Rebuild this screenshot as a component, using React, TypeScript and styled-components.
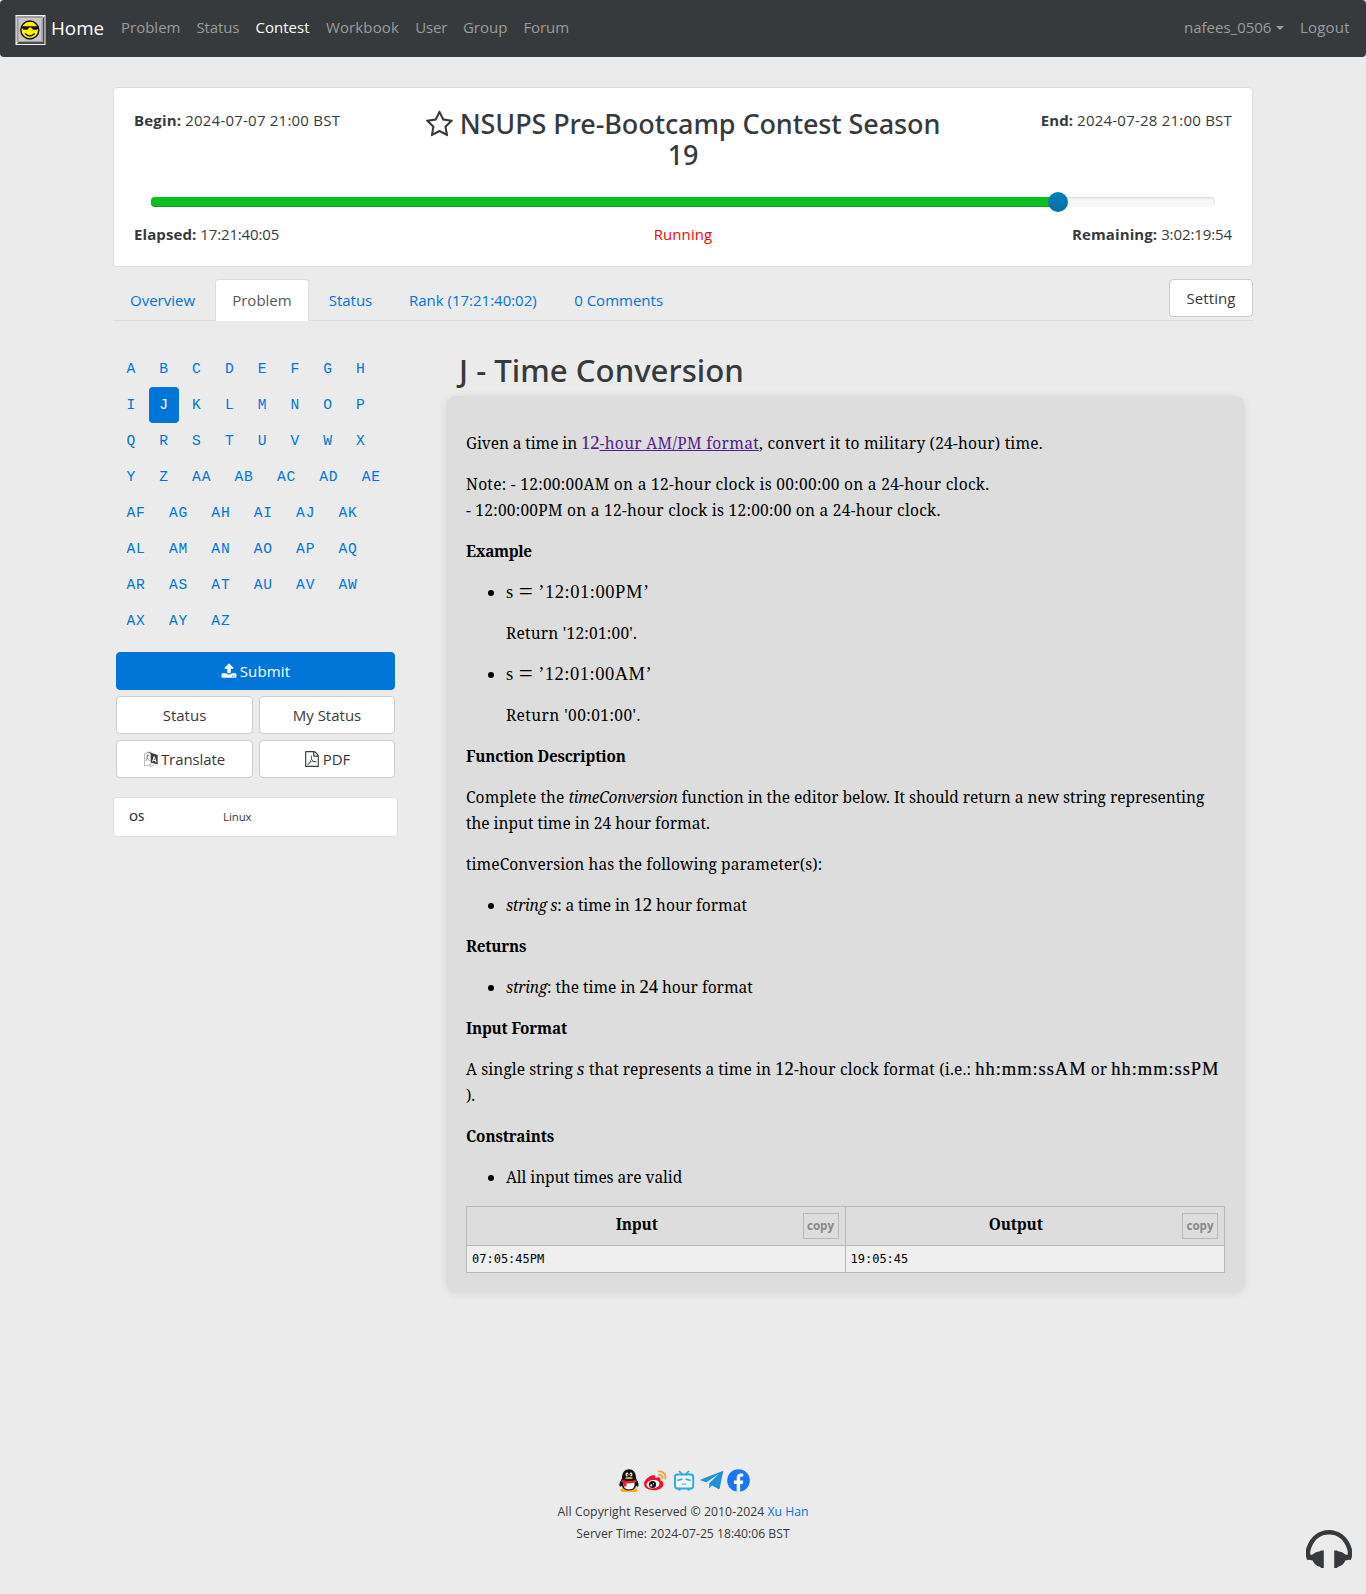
import React from "react";
import styled, { createGlobalStyle } from "styled-components";

const GlobalStyle = createGlobalStyle`
  *, *::before, *::after { box-sizing: border-box; }
  body {
    margin: 0;
    background: #ebebeb;
    color: #373a3c;
    font-family: "Open Sans", "Noto Sans", sans-serif;
    font-size: 15px;
    line-height: 24px;
  }
  a { color: #0275d8; text-decoration: none; }
`;

/* ---------- shared ---------- */

const Tracked = styled.span<{ $ls?: number }>`
  letter-spacing: ${(p) => p.$ls ?? 0}px;
  white-space: nowrap;
`;

const Strong = styled.strong<{ $ls?: number }>`
  font-weight: 700;
  letter-spacing: ${(p) => p.$ls ?? 0}px;
`;

const Page = styled.div`
  display: flex;
  flex-direction: column;
  min-height: 1594px;
`;

/* ---------- navbar ---------- */

const Navbar = styled.nav`
  display: flex;
  align-items: flex-start;
  height: 57px;
  padding: 0 16px 0 15px;
  background: #373a3c;
  border-radius: 4px;
`;

const Brand = styled.a`
  display: flex;
  width: 106px;
  padding-top: 15px;
  gap: 5px;
  color: #fff;
  font-size: 18.8px;
  line-height: 26px;
  white-space: nowrap;
`;

const NavList = styled.div`
  display: flex;
  gap: 16px;
  padding-top: 15px;
  margin-right: auto;
`;

const NavRight = styled(NavList)`
  margin-right: 0;
`;

const NavLink = styled.a<{ $w: number; $ls?: number; $active?: boolean }>`
  width: ${(p) => p.$w}px;
  color: ${(p) => (p.$active ? "#fff" : "#9b9c9d")};
  letter-spacing: ${(p) => p.$ls ?? 0}px;
  white-space: nowrap;
`;

const UserLink = styled(NavLink)`
  display: flex;
  align-items: center;
  gap: 5px;
`;

const Caret = styled.span`
  margin-top: 2px;
  border: 4.5px solid transparent;
  border-top-color: currentColor;
  border-bottom: 0;
`;

/* ---------- contest header ---------- */

const Container = styled.main`
  width: 1140px;
  margin: 30px auto 0;
`;

const ContestCard = styled.section`
  height: 180px;
  padding: 20px;
  background: #fff;
  border: 1px solid #dedede;
  border-radius: 4px;
`;

const CardTop = styled.div`
  display: grid;
  grid-template-columns: 1fr 550px 1fr;
  height: 62px;
`;

const CardBottom = styled.div`
  display: grid;
  grid-template-columns: 1fr auto 1fr;
`;

const TimeText = styled.div<{ $right?: boolean }>`
  text-align: ${(p) => (p.$right ? "right" : "left")};
  white-space: nowrap;
`;

const ContestTitle = styled.h3`
  margin: 0;
  font-family: "Noto Sans", sans-serif;
  font-weight: 500;
  font-size: 27px;
  line-height: 31px;
  letter-spacing: -0.1px;
  text-align: center;
`;

const StarSlot = styled.span`
  display: inline-block;
  width: 29px;
  height: 29px;
  margin-right: 5px;
  vertical-align: -5px;
  svg { display: block; }
`;

const Slider = styled.div`
  position: relative;
  height: 10px;
  margin: 27px 17px 15px;
  border-radius: 4px;
  background: linear-gradient(#f3f3f3, #f9f9f9);
  box-shadow: inset 0 1px 2px rgba(0, 0, 0, 0.1);
`;

const SliderFill = styled.div`
  width: 85.2%;
  height: 10px;
  border-radius: 4px 0 0 4px;
  background: #0abf22;
  box-shadow: inset 0 -1px 0 rgba(0, 0, 0, 0.15);
`;

const SliderHandle = styled.div`
  position: absolute;
  top: -5px;
  left: 85.2%;
  width: 20px;
  height: 20px;
  margin-left: -10px;
  border-radius: 50%;
  background: linear-gradient(#0480be, #036fa5);
`;

const Running = styled.div`
  color: #f00;
  letter-spacing: 0.1px;
`;

/* ---------- tabs ---------- */

const TabBar = styled.div`
  display: flex;
  gap: 3.2px;
  height: 42px;
  margin-top: 12px;
  border-bottom: 1px solid #ddd;
`;

const Tab = styled.a<{ $w: number; $ls?: number; $active?: boolean }>`
  width: ${(p) => p.$w}px;
  height: 42px;
  padding-top: 8px;
  border: 1px solid ${(p) => (p.$active ? "#ddd" : "transparent")};
  border-bottom: 0;
  border-radius: 4px 4px 0 0;
  background: ${(p) => (p.$active ? "#fff" : "transparent")};
  color: ${(p) => (p.$active ? "#55595c" : "#0275d8")};
  letter-spacing: ${(p) => p.$ls ?? 0}px;
  text-align: center;
  white-space: nowrap;
`;

const Button = styled.button<{ $primary?: boolean; $wide?: boolean }>`
  display: flex;
  align-items: center;
  justify-content: center;
  gap: 3px;
  grid-column: ${(p) => (p.$wide ? "1 / -1" : "auto")};
  height: 38px;
  padding: 0 0 1px;
  border: 1px solid ${(p) => (p.$primary ? "#0275d8" : "#ccc")};
  border-radius: 4px;
  background: ${(p) => (p.$primary ? "#0275d8" : "#fff")};
  color: ${(p) => (p.$primary ? "#fff" : "#373a3c")};
  font: inherit;
`;

const SettingButton = styled(Button)`
  width: 84px;
  margin-left: auto;
  letter-spacing: 0.1px;
`;

/* ---------- sidebar ---------- */

const Columns = styled.div`
  display: flex;
  align-items: flex-start;
`;

const Sidebar = styled.aside`
  width: 285px;
  padding-top: 30px;
`;

const ProblemGrid = styled.div`
  display: flex;
  flex-wrap: wrap;
  gap: 0 2.9px;
  padding: 0 0 0 3px;
`;

const ProblemLink = styled.a<{ $active?: boolean }>`
  height: 36px;
  padding: 0 9.8px 0 10.5px;
  border-radius: 4px;
  background: ${(p) => (p.$active ? "#0275d8" : "transparent")};
  color: ${(p) => (p.$active ? "#fff" : "#0275d8")};
  font-family: "Courier New", "Liberation Mono", monospace;
  font-size: 14.6px;
  letter-spacing: 0.84px;
  line-height: 37px;
`;

const Actions = styled.div`
  display: grid;
  grid-template-columns: 137px 136px;
  gap: 6px;
  margin: 13px 3px 0;
`;

const InfoCard = styled.dl`
  display: flex;
  height: 40px;
  margin: 19px 0 0;
  padding: 7px 15px;
  border: 1px solid #dedede;
  border-radius: 4px;
  background: #fff;
  font-size: 11.5px;
  letter-spacing: -0.1px;
`;

const InfoTerm = styled.dt`
  width: 94px;
  font-weight: 600;
`;

const InfoValue = styled.dd`
  margin: 0;
`;

/* ---------- statement ---------- */

const Content = styled.section`
  width: 799px;
  margin-left: 48px;
`;

const ProblemTitle = styled.h2`
  margin: 0;
  padding: 28px 0 0 13px;
  height: 75px;
  font-family: "Noto Sans", sans-serif;
  font-weight: 500;
  font-size: 31.2px;
  line-height: 42px;
  white-space: nowrap;
`;

const Statement = styled.article`
  padding: 35.2px 20px 20px;
  height: 897px;
  border-radius: 10px;
  background: #ddd;
  box-shadow: 0 1px 10px rgba(0, 0, 0, 0.07);
  color: #000;
  font-family: "Noto Serif", "Liberation Serif", serif;
  font-size: 15.5px;
  line-height: 25.84px;
  white-space: nowrap;
  p { margin: 0 0 15.2px; }
  ul { margin: 0 0 15.2px; padding-left: 40px; }
`;

const Bold = styled.b<{ $ls?: number }>`
  font-size: 15.3px;
  font-weight: 700;
  letter-spacing: ${(p) => p.$ls ?? -0.25}px;
`;

const Italic = styled.em<{ $ls?: number }>`
  letter-spacing: ${(p) => p.$ls ?? -0.3}px;
`;

const Visited = styled.a`
  color: #551a8b;
  letter-spacing: 0.34px;
  text-decoration: underline;
`;

const MathText = styled.span<{ $ls?: number; $heavy?: boolean; $italic?: boolean; $visited?: boolean }>`
  display: inline-block;
  color: ${(p) => (p.$visited ? "#551a8b" : "#000")};
  font-family: "Liberation Serif", serif;
  font-size: 18.5px;
  font-style: ${(p) => (p.$italic ? "italic" : "normal")};
  line-height: 20px;
  letter-spacing: ${(p) => p.$ls ?? 0}px;
  -webkit-text-stroke: ${(p) => (p.$heavy ? "0.2px currentColor" : "0")};
`;

const Equals = styled(MathText)`
  width: 25px;
  font-size: 25px;
  line-height: 14px;
  text-align: center;
  vertical-align: -2px;
`;

const Samples = styled.div`
  display: grid;
  grid-template-columns: 1fr 1fr;
  border: 1px solid #b9b9b9;
  height: 67px;
  grid-template-rows: 39px 26px;
`;

const SampleHead = styled.div<{ $last?: boolean }>`
  display: flex;
  justify-content: space-between;
  padding: 6px;
  border-right: ${(p) => (p.$last ? 0 : 1)}px solid #b9b9b9;
  border-bottom: 1px solid #b9b9b9;
`;

const SampleTitle = styled(Bold)`
  flex: 1;
  padding-right: 2px;
  line-height: 23px;
  font-size: 15.4px;
  letter-spacing: -0.2px;
  text-align: center;
`;

const CopyButton = styled.button`
  width: 36px;
  height: 26px;
  padding: 0;
  border: 1px solid #b9b9b9;
  background: transparent;
  color: #888;
  font: 700 11.6px/24px "Open Sans", sans-serif;
`;

const SampleCell = styled.pre<{ $last?: boolean }>`
  margin: 0;
  padding-left: 5px;
  border-right: ${(p) => (p.$last ? 0 : 1)}px solid #b9b9b9;
  background: #efefef;
  font: 12px/26px "DejaVu Sans Mono", monospace;
`;

/* ---------- footer ---------- */

const Footer = styled.footer`
  position: relative;
  display: flex;
  flex-direction: column;
  align-items: center;
  margin-top: 175px;
  font-size: 12.2px;
  line-height: 22px;
`;

const Socials = styled.div`
  display: flex;
  gap: 3.3px;
  height: 25px;
  margin-bottom: 8px;
  padding-left: 2px;
`;

const Support = styled.div`
  position: absolute;
  right: 14px;
  top: 61px;
  line-height: 0;
`;

/* ---------- icons ---------- */

const FaIcon = ({ d, size }: { d: string; size: number }) => (
  <svg width={size} height={size} viewBox="0 0 1792 1792" fill="currentColor">
    <path d={d} />
  </svg>
);

const STAR =
  "M1137 1004l306-297-422-62-189-382-189 382-422 62 306 297-73 421 378-199 377 199zm527-357q0 22-26 48l-363 354 86 500q1 7 1 20 0 50-41 50-19 0-40-12l-449-236-449 236q-22 12-40 12-21 0-31.5-14.5t-10.5-35.5q0-6 2-20l86-500-364-354q-25-27-25-48 0-37 56-46l502-73 225-455q19-41 49-41t49 41l225 455 502 73q56 9 56 46z";
const UPLOAD =
  "M1344 1472q0-26-19-45t-45-19-45 19-19 45 19 45 45 19 45-19 19-45zm256 0q0-26-19-45t-45-19-45 19-19 45 19 45 45 19 45-19 19-45zm128-224v320q0 40-28 68t-68 28h-1472q-40 0-68-28t-28-68v-320q0-40 28-68t68-28h427q21 56 70.5 92t110.5 36h256q61 0 110.5-36t70.5-92h427q40 0 68 28t28 68zm-325-648q-17 40-59 40h-256v448q0 26-19 45t-45 19h-256q-26 0-45-19t-19-45v-448h-256q-42 0-59-40-17-39 14-69l448-448q18-19 45-19t45 19l448 448q31 30 14 69z";
const PDF =
  "M1596 380q28 28 48 76t20 88v1152q0 40-28 68t-68 28h-1344q-40 0-68-28t-28-68v-1600q0-40 28-68t68-28h896q40 0 88 20t76 48zm-444-244v376h376q-10-29-22-41l-313-313q-12-12-41-22zm384 1528v-1024h-416q-40 0-68-28t-28-68v-416h-768v1536h1280zm-514-593q33 26 84 56 59-7 117-7 147 0 177 49 16 22 2 52 0 1-1 2l-2 2v1q-6 38-71 38-48 0-115-20t-130-53q-221 24-392 83-153 262-242 262-15 0-28-7l-24-12q-1-1-6-5-10-10-6-36 9-40 56-91.5t132-96.5q14-9 23 6 2 2 2 4 52-85 107-197 68-136 104-262-24-82-30.5-159.5t6.5-127.5q11-40 42-40h22q23 0 35 15 18 21 9 68-2 6-4 8 1 3 1 8v30q-2 123-14 192 55 164 146 238zm-576 411q52-24 137-158-51 40-87.5 84t-49.5 74zm398-920q-15 42-2 132 1-7 7-44 0-3 7-43 1-4 4-8-1-1-1-2-1-2-1-3-1-22-13-36 0 1-1 2v2zm-124 661q135-54 284-81-2-1-13-9.5t-16-13.5q-76-67-127-176-27 86-83 197-30 56-45 83zm646-16q-24-24-140-24 76 28 124 28 14 0 18-1 0-1-2-3z";

const Logo = () => (
  <svg width="31" height="30" viewBox="0 0 30 30">
    <rect width="30" height="30" fill="#f4f4f4" />
    <path d="M1 29H29V1L27 3V27H3z" fill="#4c4c4c" />
    <rect x="1" y="1" width="26" height="26" fill="#9c9c9c" />
    <rect x="3" y="3" width="23" height="23" fill="#c6c6c6" />
    <circle cx="14.3" cy="15" r="9" fill="#fff200" stroke="#111" strokeWidth="1.4" />
    <path d="M6 11.300h17v1.200l-1.500 2.300h-4l-1.800-2.300h-2l-1.700 2.300H8L6 12.500z" fill="#111" />
    <path d="M9.500 18.500q4.800 5 9.600 0" fill="none" stroke="#111" strokeWidth="1.300" />
  </svg>
);

const TranslateIcon = () => (
  <svg width="14" height="16" viewBox="0 0 14 16">
    <path d="M.5 2.500L7 .800V13.500L.5 15z" fill="#fff" stroke="#aaa" strokeWidth=".8" />
    <path d="M2 5l3.500-1M3.500 3.500q1 3-1.700 6.500M2.500 6.500l3 3.500" fill="none" stroke="#777" strokeWidth=".8" />
    <path d="M3 .600L13.700 4V13.500L6.800 11.500V3z" fill="#373a3c" />
    <path d="M8.500 10.500l1.700-5 2 6M9 9l2.600.8" fill="none" stroke="#fff" strokeWidth="1" />
    <path d="M5 15q3 1 5.500-1.500" fill="none" stroke="#aaa" strokeWidth=".9" />
  </svg>
);

const Headphones = () => (
  <svg width="46" height="40" viewBox="0 0 46 40" fill="#373a3c">
    <path d="M3.500 30C1.500 26.500 1.500 22.500 3 18.500 6.500 9 14 3.300 23 3.300s16.500 5.700 20 15.200C44.500 22.500 44.500 26.500 42.500 30" fill="none" stroke="#373a3c" strokeWidth="4.600" />
    <path d="M2 26.500L6.500 25.500Q9.500 22.500 14 22.200L15 21.500H17.800V39H15L14 37.800Q9 37 6.600 31.500L2 30.500z" />
    <path d="M44 26.500L39.500 25.500Q36.500 22.500 32 22.200L31 21.500H28.200V39H31L32 37.800Q37 37 39.400 31.500L44 30.500z" />
  </svg>
);

const QQ = () => (
  <svg width="22" height="25" viewBox="0 0 22 25">
    <ellipse cx="7" cy="22" rx="4.600" ry="2" fill="#fba916" />
    <ellipse cx="15" cy="22" rx="4.600" ry="2" fill="#fba916" />
    <path d="M4.500 10C1.500 14 .8 17 2 18.800q1.200.2 2.500-2M17.500 10c3 4 3.700 7 2.500 8.800q-1.200.2-2.500-2" fill="#111" />
    <path d="M4 10C4 4.500 7 1.200 11 1.200S18 4.500 18 10q1.500 5-.5 9.500Q15 22.500 11 22.500T4.500 19.500Q2.500 15 4 10z" fill="#111" />
    <path d="M5.500 13.500H16.500Q17.500 21.500 11 21.500T5.500 13.500z" fill="#fff" />
    <ellipse cx="9" cy="6.500" rx="1.400" ry="2" fill="#fff" />
    <ellipse cx="13" cy="6.500" rx="1.400" ry="2" fill="#fff" />
    <circle cx="9.300" cy="6.800" r=".7" /><circle cx="12.700" cy="6.800" r=".7" />
    <ellipse cx="11" cy="10" rx="3.800" ry="1.100" fill="#fba916" />
    <path d="M3.800 11.500Q11 15 18.200 11.500L18.800 13.800Q14 16 8.500 15.500V18.500H5.500V14.800L3.200 13.800z" fill="#e3222c" />
  </svg>
);

const Weibo = () => (
  <svg width="24" height="25" viewBox="0 0 24 25">
    <path d="M9 7.500C4.500 8.800 1 13 1 16c0 3.800 4.500 6.200 9.500 6.200 6 0 10-3 10-6.300 0-2-1.500-3.100-3.200-3.600.9-2.600-.8-4-4.800-2.400C13 7.500 11.500 6.800 9 7.500z" fill="#e6162d" />
    <ellipse cx="10" cy="16.200" rx="6.500" ry="4.200" fill="#fff" transform="rotate(-8 10 16.200)" />
    <circle cx="9.500" cy="16.500" r="3.600" fill="#111" />
    <circle cx="8.200" cy="17.400" r="1.100" fill="#fff" /><circle cx="10.500" cy="15.700" r=".6" fill="#fff" />
    <path d="M15.500 3.500c4.500-.8 8 2.800 6.800 7.200M16 6.800c2.300-.4 3.900 1.300 3.300 3.600" fill="none" stroke="#ff9933" strokeWidth="1.700" strokeLinecap="round" />
  </svg>
);

const Bilibili = () => (
  <svg width="26" height="25" viewBox="0 0 26 25" fill="none" stroke="#23ade5" strokeLinecap="round">
    <path d="M8.500 3.500l2.500 2.500M17.500 3.500L15 6" strokeWidth="1.700" />
    <rect x="4" y="6.500" width="18.200" height="14" rx="2.500" strokeWidth="1.900" fill="#fff" fillOpacity=".5" />
    <path d="M7 12.200l4-1M19 12.200l-4-1" strokeWidth="1.500" />
    <path d="M11 15.800q1 1.300 2 0q1 1.300 2 0" strokeWidth="1" />
    <path d="M7.500 21.700h1.500M17 21.700h1.500" strokeWidth="1.500" />
  </svg>
);

const Telegram = () => (
  <svg width="24" height="25" viewBox="0 0 24 25" fill="#1c93d8">
    <path d="M23.300 2.800L.8 11.600q-.8.5 0 .9L6.300 14.300 19 5.800 9.300 15.200 9 20.500 12 17.600 18.400 21q1 .4 1.300-.8z" />
  </svg>
);

const Facebook = () => (
  <svg width="23" height="25" viewBox="0 0 23 25">
    <circle cx="11.500" cy="12.500" r="11.300" fill="#1877f2" />
    <path d="M9.700 23.700V15.900H6.900V12.500H9.700V10c0-2.900 1.700-4.400 4.200-4.400 1.200 0 2.400.2 2.400.2v2.800h-1.400c-1.400 0-1.800.8-1.800 1.700v2.200h3.100l-.5 3.400h-2.600v7.800z" fill="#fff" />
  </svg>
);

/* ---------- data ---------- */

const NAV = [
  { label: "Problem", w: 59.5 },
  { label: "Status", w: 43.1, ls: -0.15 },
  { label: "Contest", w: 54.4, active: true },
  { label: "Workbook", w: 73.3, ls: 0.12 },
  { label: "User", w: 31.6, ls: -0.2 },
  { label: "Group", w: 44.6 },
  { label: "Forum", w: 46, ls: -0.1 },
];

const TABS = [
  { label: "Overview", w: 99 },
  { label: "Problem", w: 93.5, active: true },
  { label: "Status", w: 77.2 },
  { label: "Rank (17:21:40:02)", w: 161.2, ls: -0.01 },
  { label: "0 Comments", w: 124 },
];

const PROBLEMS = Array.from({ length: 52 }, (_, i) =>
  i < 26 ? String.fromCharCode(65 + i) : "A" + String.fromCharCode(39 + i)
);

export default function App() {
  return (
    <Page>
      <GlobalStyle />
      <Navbar>
        <Brand href="#"><Logo />Home</Brand>
        <NavList>
          {NAV.map((n) => (
            <NavLink key={n.label} href="#" $w={n.w} $ls={n.ls} $active={n.active}>{n.label}</NavLink>
          ))}
        </NavList>
        <NavRight>
          <UserLink href="#" $w={100}>nafees_0506<Caret /></UserLink>
          <NavLink href="#" $w={50} $ls={0.2}>Logout</NavLink>
        </NavRight>
      </Navbar>

      <Container>
        <ContestCard>
          <CardTop>
            <TimeText><Strong $ls={0.2}>Begin:</Strong> <Tracked $ls={0.22}>2024-07-07 21:00 BST</Tracked></TimeText>
            <ContestTitle><StarSlot><FaIcon d={STAR} size={29} /></StarSlot>NSUPS Pre-Bootcamp Contest Season 19</ContestTitle>
            <TimeText $right><Strong $ls={0.1}>End:</Strong> <Tracked $ls={0.22}>2024-07-28 21:00 BST</Tracked></TimeText>
          </CardTop>
          <Slider><SliderFill /><SliderHandle /></Slider>
          <CardBottom>
            <TimeText><Strong $ls={0.1}>Elapsed:</Strong> <Tracked $ls={-0.15}>17:21:40:05</Tracked></TimeText>
            <Running>Running</Running>
            <TimeText $right><Strong $ls={0.1}>Remaining:</Strong> <Tracked $ls={-0.1}>3:02:19:54</Tracked></TimeText>
          </CardBottom>
        </ContestCard>

        <TabBar>
          {TABS.map((t) => (
            <Tab key={t.label} href="#" $w={t.w} $ls={t.ls} $active={t.active}>{t.label}</Tab>
          ))}
          <SettingButton>Setting</SettingButton>
        </TabBar>

        <Columns>
          <Sidebar>
            <ProblemGrid>
              {PROBLEMS.map((p) => (
                <ProblemLink key={p} href="#" $active={p === "J"}>{p}</ProblemLink>
              ))}
            </ProblemGrid>
            <Actions>
              <Button $primary $wide><FaIcon d={UPLOAD} size={16} /><Tracked $ls={0.15}>Submit</Tracked></Button>
              <Button>Status</Button>
              <Button>My Status</Button>
              <Button><TranslateIcon /><Tracked $ls={-0.1}>Translate</Tracked></Button>
              <Button><FaIcon d={PDF} size={16} />PDF</Button>
            </Actions>
            <InfoCard>
              <InfoTerm>OS</InfoTerm>
              <InfoValue>Linux</InfoValue>
            </InfoCard>
          </Sidebar>

          <Content>
            <ProblemTitle>J - Time Conversion</ProblemTitle>
            <Statement>
              <p>
                <Tracked $ls={-0.09}>Given a time in </Tracked>
                <MathText $visited $heavy>12</MathText>
                <Visited href="#">-hour AM/PM format</Visited>
                <Tracked $ls={0.22}>, convert it to military (24-hour) time.</Tracked>
              </p>
              <p>
                <Tracked $ls={0.3}>Note: - 12:00:00AM on a 12-hour clock is 00:00:00 on a 24-hour clock.</Tracked>
                <br />
                <Tracked $ls={0.26}>- 12:00:00PM on a 12-hour clock is 12:00:00 on a 24-hour clock.</Tracked>
              </p>
              <p><Bold $ls={-0.35}>Example</Bold></p>
              <ul>
                <li>
                  <p><MathText>s</MathText><Equals>=</Equals><MathText $ls={0.55}>’12:01:00PM’</MathText></p>
                  <p><Tracked $ls={0.25}>Return '12:01:00'.</Tracked></p>
                </li>
                <li>
                  <p><MathText>s</MathText><Equals>=</Equals><MathText $ls={0.5}>’12:01:00AM’</MathText></p>
                  <p><Tracked $ls={0.45}>Return '00:01:00'.</Tracked></p>
                </li>
              </ul>
              <p><Bold $ls={-0.19}>Function Description</Bold></p>
              <p>
                <Tracked $ls={0.1}>Complete the </Tracked>
                <Italic>timeConversion</Italic>
                <Tracked $ls={-0.03}> function in the editor below. It should return a new string representing</Tracked>
                <br />
                <Tracked>the input time in 24 hour format.</Tracked>
              </p>
              <p><Tracked $ls={0.08}>timeConversion has the following parameter(s):</Tracked></p>
              <ul>
                <li><Italic $ls={-0.35}>string s</Italic><Tracked $ls={-0.1}>: a time in </Tracked><MathText $heavy>12</MathText> hour format</li>
              </ul>
              <p><Bold $ls={-0.2}>Returns</Bold></p>
              <ul>
                <li><Italic>string</Italic>: the time in <MathText $heavy>24</MathText> hour format</li>
              </ul>
              <p><Bold $ls={-0.2}>Input Format</Bold></p>
              <p>
                <Tracked $ls={0.1}>A single string </Tracked>
                <MathText $heavy $italic $ls={0.8}>s</MathText>
                <Tracked $ls={0.03}> that represents a time in </Tracked>
                <MathText $heavy $ls={0.3}>12</MathText>
                <Tracked $ls={0.18}>-hour clock format (i.e.: </Tracked>
                <MathText $ls={0.95} $heavy>hh:mm:ssAM</MathText>
                <Tracked $ls={0.1}> or </Tracked>
                <MathText $ls={0.95} $heavy>hh:mm:ssPM</MathText>
                <br />).
              </p>
              <p><Bold $ls={-0.12}>Constraints</Bold></p>
              <ul>
                <li><Tracked $ls={-0.08}>All input times are valid</Tracked></li>
              </ul>
              <Samples>
                <SampleHead><SampleTitle>Input</SampleTitle><CopyButton>copy</CopyButton></SampleHead>
                <SampleHead $last><SampleTitle>Output</SampleTitle><CopyButton>copy</CopyButton></SampleHead>
                <SampleCell>07:05:45PM</SampleCell>
                <SampleCell $last>19:05:45</SampleCell>
              </Samples>
            </Statement>
          </Content>
        </Columns>
      </Container>

      <Footer>
        <Socials><QQ /><Weibo /><Bilibili /><Telegram /><Facebook /></Socials>
        <div><Tracked $ls={0.09}>All Copyright Reserved © 2010-2024</Tracked> <a href="#">Xu Han</a></div>
        <div>Server Time: 2024-07-25 18:40:06 BST</div>
        <Support><Headphones /></Support>
      </Footer>
    </Page>
  );
}
